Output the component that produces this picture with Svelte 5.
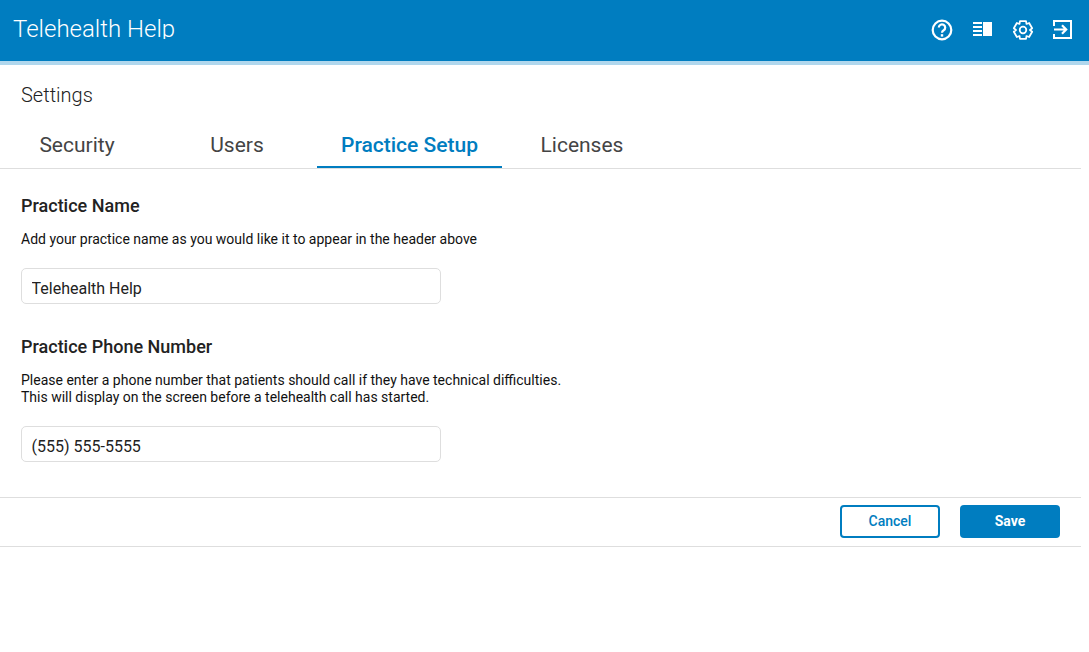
<script>
  const tabs = ['Security', 'Users', 'Practice Setup', 'Licenses'];

  // Six-lobed cog outline around (12,12)
  function cogPath(outer, inner) {
    const pts = [];
    for (let k = 0; k < 6; k++) {
      const a = (k * Math.PI) / 3 - Math.PI / 2;
      const step = 0.33;
      const wide = 0.52;
      [[inner, -wide], [outer, -step], [outer, step], [inner, wide]].forEach(([r, d]) => {
        pts.push([12 + r * Math.cos(a + d), 12 + r * Math.sin(a + d)]);
      });
    }
    return 'M' + pts.map((p) => p[0].toFixed(2) + ' ' + p[1].toFixed(2)).join('L') + 'Z';
  }
  const cog = cogPath(10.2, 7.6);
</script>

<div class="page">
  <header class="topbar">
    <span class="brand">Telehealth Help</span>
    <div class="icons">
      <svg viewBox="0 0 24 24" width="24" height="24" fill="none" stroke="#fff" stroke-width="2.2">
        <circle cx="12" cy="12" r="9.3" />
        <path d="M8.8 9.6a3.2 3.2 0 1 1 4.9 2.7c-1.1.7-1.7 1.3-1.7 2.5" />
        <rect x="10.8" y="16.2" width="2.4" height="2.4" fill="#fff" stroke="none" />
      </svg>
      <svg class="panel" viewBox="0 0 19 14" width="19" height="14" fill="#fff">
        <rect x="0" y="0" width="9" height="2" />
        <rect x="0" y="4" width="9" height="2" />
        <rect x="0" y="8" width="9" height="2" />
        <rect x="0" y="12" width="9" height="2" />
        <rect x="10" y="0" width="9" height="14" />
      </svg>
      <svg class="gear" viewBox="0 0 24 24" width="22" height="22" fill="none" stroke="#fff" stroke-width="1.9" stroke-linejoin="round">
        <path d={cog} />
        <circle cx="12" cy="12" r="3.6" />
      </svg>
      <svg viewBox="0 0 20 20" width="20" height="20" fill="none" stroke="#fff" stroke-width="2">
        <path d="M2 6V1h17v17H2v-4" />
        <path d="M2 9.5h11.5M10 5.3l4.2 4.2-4.2 4.2" stroke-width="2.2" />
      </svg>
    </div>
  </header>

  <main>
    <h1>Settings</h1>
    <nav class="tabs">
      {#each tabs as tab, i}
        <span class="tab" class:active={i === 2}>{tab}</span>
      {/each}
    </nav>

    <section class="form">
      <h2>Practice Name</h2>
      <p>Add your practice name as you would like it to appear in the header above</p>
      <input class="field" value="Telehealth Help" />

      <h2 class="second">Practice Phone Number</h2>
      <p>Please enter a phone number that patients should call if they have technical difficulties.<br />This will display on the screen before a telehealth call has started.</p>
      <input class="field" value="(555) 555-5555" />
    </section>

    <footer class="actions">
      <button class="btn outline">Cancel</button>
      <button class="btn solid">Save</button>
    </footer>
  </main>
</div>

<style>
  :global(body) {
    margin: 0;
    background: #fff;
    font-family: Roboto, "Liberation Sans", sans-serif;
    overflow: hidden;
  }
  .page {
    width: 1089px;
    height: 652px;
    overflow: hidden;
  }
  .topbar {
    height: 61px;
    box-sizing: content-box;
    background: #007dc0;
    border-bottom: 4px solid #b0d7ed;
    display: flex;
    justify-content: space-between;
    overflow: hidden;
    color: #fff;
  }
  .brand {
    margin-left: 13px;
    margin-top: 17px;
    font-size: 24px;
    font-weight: 300;
    line-height: 25px;
    height: 22px;
    overflow: hidden;
  }
  .icons {
    display: grid;
    grid-template-columns: repeat(4, 40px);
    justify-items: center;
    align-items: center;
    padding-right: 7px;
    height: 60px;
  }
  .panel {
    margin-bottom: 2px;
  }
  .gear {
    margin-left: 2px;
    margin-bottom: 1px;
  }
  main {
    width: 1081px;
  }
  h1 {
    margin: 0;
    padding: 18px 0 0 21px;
    font-size: 20px;
    line-height: 24px;
    font-weight: 300;
    color: #222;
  }
  .tabs {
    display: flex;
    margin-top: 12px;
    height: 49px;
    border-bottom: 1px solid #dedede;
  }
  .tab {
    min-width: 160px;
    padding: 10px 24px 0;
    box-sizing: border-box;
    text-align: center;
    font-size: 21px;
    line-height: 32px;
    color: #444;
    height: 49px;
  }
  .tab:first-child {
    margin-left: -3px;
  }
  .tab.active {
    color: #007dc0;
    font-weight: 500;
    border-bottom: 2px solid #007dc0;
  }
  .form {
    padding: 26px 0 35px 21px;
    display: flex;
    flex-direction: column;
    align-items: flex-start;
  }
  h2 {
    margin: 0;
    font-size: 18px;
    line-height: 22px;
    font-weight: 500;
    color: #222;
  }
  h2.second {
    margin-top: 32px;
  }
  p {
    margin: 14px 0 0;
    font-size: 14px;
    line-height: 17px;
    color: #111;
  }
  .field {
    display: block;
    width: 420px;
    height: 36px;
    box-sizing: border-box;
    margin-top: 20px;
    padding: 5px 10px 0 9.5px;
    border: 1px solid #dedede;
    border-radius: 5px;
    font: 400 16px Roboto, sans-serif;
    color: #222;
    outline: none;
  }
  .actions {
    height: 41px;
    border-top: 1px solid #dedede;
    border-bottom: 1px solid #dedede;
    display: flex;
    align-items: flex-start;
    justify-content: flex-end;
    gap: 20px;
    padding: 7px 21px 0 0;
    box-sizing: content-box;
  }
  .btn {
    width: 100px;
    height: 33px;
    box-sizing: border-box;
    border-radius: 4px;
    font: 500 14px Roboto, sans-serif;
    padding: 0 0 2px;
  }
  .outline {
    background: #fff;
    color: #007dc0;
    border: 2px solid #007dc0;
  }
  .solid {
    background: #007dc0;
    color: #fff;
    border: 0;
    font-weight: 700;
  }
</style>
